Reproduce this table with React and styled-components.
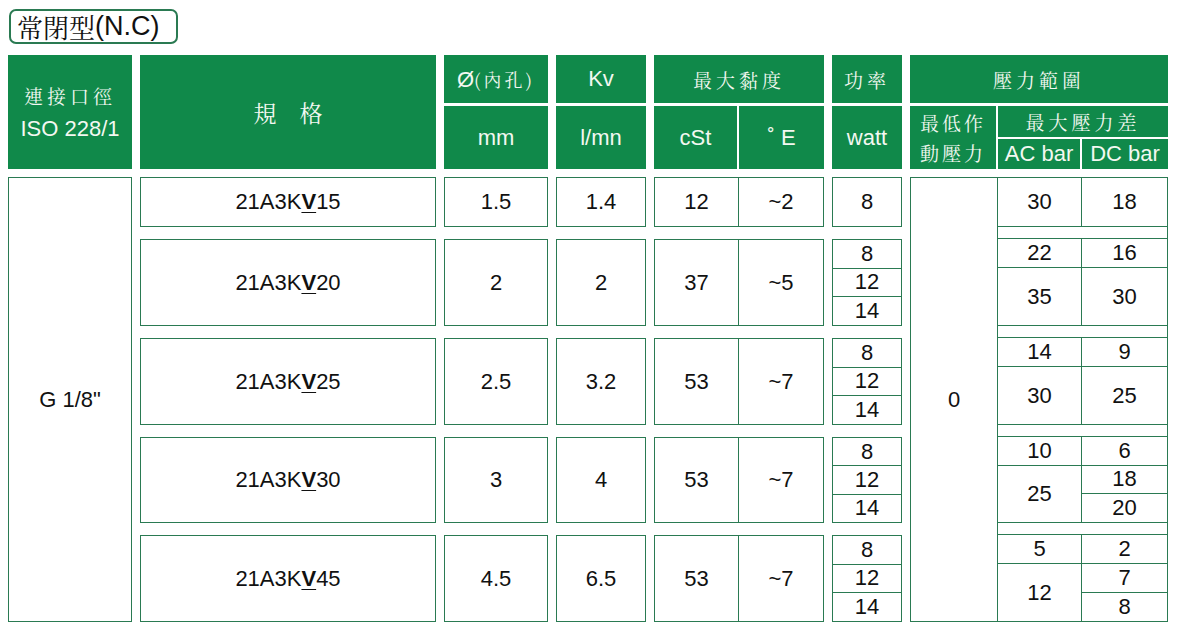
import React from "react";
import styled, { createGlobalStyle } from "styled-components";

const GREEN = "#10894a";
const LINE = "#2a7a52";
const CJK = `"Noto Serif CJK TC", "Noto Sans CJK TC", serif`;
const LATIN = `"Liberation Sans", Arial, sans-serif`;
const COLS = "124px 296px 104px 90px 170px 70px 258px";

const GlobalStyle = createGlobalStyle`
  body {
    margin: 0;
    background: #fff;
    font-family: ${LATIN};
    color: #111;
  }
`;

const Page = styled.div`
  width: 1160px;
  padding: 9px 8px 0 8px;
`;

const Title = styled.div`
  display: inline-flex;
  align-items: center;
  box-sizing: border-box;
  height: 35px;
  margin-left: 1px;
  padding: 0 16px 0 6px;
  border: 2px solid ${LINE};
  border-radius: 7px;
  font-size: 27px;
  color: #111;
`;

const Cjk = styled.span`
  font-family: ${CJK};
  font-weight: ${(p) => p.$weight || 400};
  font-size: ${(p) => p.$size || 19}px;
  letter-spacing: ${(p) => (p.$spacing == null ? 4 : p.$spacing)}px;
`;

// ---------- header ----------
const Header = styled.div`
  display: grid;
  grid-template-columns: ${COLS};
  grid-template-rows: 48px 63px;
  column-gap: 8px;
  row-gap: 3px;
  margin-top: 11px;
`;

const Head = styled.div`
  grid-column: ${(p) => p.$col};
  grid-row: ${(p) => p.$row || "auto"};
  display: flex;
  flex-direction: column;
  align-items: center;
  justify-content: center;
  background: ${GREEN};
  color: #f3f8f1;
  font-size: 22px;
  line-height: ${(p) => p.$lh || "normal"};
`;

const HeadSplit = styled.div`
  grid-column: ${(p) => p.$col};
  grid-row: 2;
  display: grid;
  grid-template-columns: ${(p) => p.$cols};
  gap: 2px;
  background: #fff;
`;

const HeadStack = styled.div`
  display: grid;
  grid-template-rows: 31px 1fr;
  gap: 2px;
`;

const HeadPair = styled.div`
  display: grid;
  grid-template-columns: 82px 1fr;
  gap: 2px;
`;

// ---------- body ----------
const Body = styled.div`
  display: grid;
  grid-template-columns: ${COLS};
  grid-template-rows: 50px 87px 87px 86px 87px;
  column-gap: 8px;
  row-gap: 12px;
  margin-top: 8px;
  font-size: 22px;
`;

const Cell = styled.div`
  grid-column: ${(p) => p.$col};
  grid-row: ${(p) => p.$row};
  box-sizing: border-box;
  display: flex;
  align-items: center;
  justify-content: center;
  border: 1px solid ${LINE};
  background: #fff;
`;

const Frame = styled.div`
  grid-column: ${(p) => p.$col};
  grid-row: ${(p) => p.$row};
  display: grid;
  grid-template-columns: ${(p) => p.$cols || "1fr"};
  grid-template-rows: ${(p) => p.$rows || "1fr"};
  gap: 1px;
  padding: 1px;
  background: ${LINE};
`;

const Pane = styled.div`
  grid-column: ${(p) => p.$col || "auto"};
  grid-row: ${(p) => p.$row || "auto"};
  display: flex;
  align-items: center;
  justify-content: center;
  background: #fff;
  line-height: 1;
`;

const Group = styled.div`
  grid-column: 2;
  display: grid;
  grid-template-columns: 83px 1fr;
  grid-template-rows: ${(p) => `repeat(${p.$n}, 1fr)`};
  gap: 1px;
  background: ${LINE};
`;

const Strip = styled.div`
  grid-column: 2;
  background: #fff;
`;

const Mark = styled.span`
  font-weight: 700;
  text-decoration: underline;
  text-decoration-thickness: 1px;
  text-underline-offset: 3px;
`;

const rows = [
  {
    model: "15", mm: "1.5", kv: "1.4", cst: "12", e: "~2", watt: ["8"],
    n: 1,
    p: [{ t: "30", c: 1, r: 1 }, { t: "18", c: 2, r: 1 }],
  },
  {
    model: "20", mm: "2", kv: "2", cst: "37", e: "~5", watt: ["8", "12", "14"],
    n: 3,
    p: [
      { t: "22", c: 1, r: 1 }, { t: "16", c: 2, r: 1 },
      { t: "35", c: 1, r: "2 / 4" }, { t: "30", c: 2, r: "2 / 4" },
    ],
  },
  {
    model: "25", mm: "2.5", kv: "3.2", cst: "53", e: "~7", watt: ["8", "12", "14"],
    n: 3,
    p: [
      { t: "14", c: 1, r: 1 }, { t: "9", c: 2, r: 1 },
      { t: "30", c: 1, r: "2 / 4" }, { t: "25", c: 2, r: "2 / 4" },
    ],
  },
  {
    model: "30", mm: "3", kv: "4", cst: "53", e: "~7", watt: ["8", "12", "14"],
    n: 3,
    p: [
      { t: "10", c: 1, r: 1 }, { t: "6", c: 2, r: 1 },
      { t: "25", c: 1, r: "2 / 4" }, { t: "18", c: 2, r: 2 }, { t: "20", c: 2, r: 3 },
    ],
  },
  {
    model: "45", mm: "4.5", kv: "6.5", cst: "53", e: "~7", watt: ["8", "12", "14"],
    n: 3,
    p: [
      { t: "5", c: 1, r: 1 }, { t: "2", c: 2, r: 1 },
      { t: "12", c: 1, r: "2 / 4" }, { t: "7", c: 2, r: 2 }, { t: "8", c: 2, r: 3 },
    ],
  },
];

const App = () => {
  return (
    <Page>
      <GlobalStyle />
      <Title>
        <Cjk $size={26} $spacing={0}>常閉型</Cjk>(N.C)
      </Title>

      <Header>
        <Head $col={1} $row="1 / 3" $lh="33px">
          <Cjk>連接口徑</Cjk>
          <span>ISO 228/1</span>
        </Head>
        <Head $col={2} $row="1 / 3">
          <Cjk $size={23} $spacing={0}>規　格</Cjk>
        </Head>
        <Head $col={3} $row={1}>
          <span>
            Ø<Cjk $size={18} $spacing={3}>(內孔)</Cjk>
          </span>
        </Head>
        <Head $col={3} $row={2}>mm</Head>
        <Head $col={4} $row={1}>Kv</Head>
        <Head $col={4} $row={2}>l/mn</Head>
        <Head $col={5} $row={1}>
          <Cjk>最大黏度</Cjk>
        </Head>
        <HeadSplit $col={5} $cols="83px 1fr">
          <Head>cSt</Head>
          <Head>˚ E</Head>
        </HeadSplit>
        <Head $col={6} $row={1}>
          <Cjk>功率</Cjk>
        </Head>
        <Head $col={6} $row={2}>watt</Head>
        <Head $col={7} $row={1}>
          <Cjk>壓力範圍</Cjk>
        </Head>
        <HeadSplit $col={7} $cols="86px 1fr">
          <Head $lh="30px">
            <Cjk $spacing={3}>最低作</Cjk>
            <Cjk $spacing={3}>動壓力</Cjk>
          </Head>
          <HeadStack>
            <Head>
              <Cjk>最大壓力差</Cjk>
            </Head>
            <HeadPair>
              <Head>AC bar</Head>
              <Head>DC bar</Head>
            </HeadPair>
          </HeadStack>
        </HeadSplit>
      </Header>

      <Body>
        <Cell $col={1} $row="1 / -1">G 1/8"</Cell>
        {rows.map((r, i) => (
          <React.Fragment key={r.model}>
            <Cell $col={2} $row={i + 1}>
              <span>
                21A3K<Mark>V</Mark>
                {r.model}
              </span>
            </Cell>
            <Cell $col={3} $row={i + 1}>{r.mm}</Cell>
            <Cell $col={4} $row={i + 1}>{r.kv}</Cell>
            <Frame $col={5} $row={i + 1} $cols="83px 1fr">
              <Pane>{r.cst}</Pane>
              <Pane>{r.e}</Pane>
            </Frame>
            <Frame $col={6} $row={i + 1} $rows={`repeat(${r.watt.length}, 1fr)`}>
              {r.watt.map((w, j) => (
                <Pane key={j}>{w}</Pane>
              ))}
            </Frame>
          </React.Fragment>
        ))}
        <Frame
          $col={7}
          $row="1 / -1"
          $cols="86px 1fr"
          $rows="48px 11px 86px 11px 86px 11px 85px 11px 86px"
        >
          <Pane $col={1} $row="1 / -1">0</Pane>
          {rows.map((r, i) => (
            <React.Fragment key={r.model}>
              {i > 0 && <Strip />}
              <Group $n={r.n}>
                {r.p.map((c, j) => (
                  <Pane key={j} $col={c.c} $row={c.r}>
                    {c.t}
                  </Pane>
                ))}
              </Group>
            </React.Fragment>
          ))}
        </Frame>
      </Body>
    </Page>
  );
};

export default App;
